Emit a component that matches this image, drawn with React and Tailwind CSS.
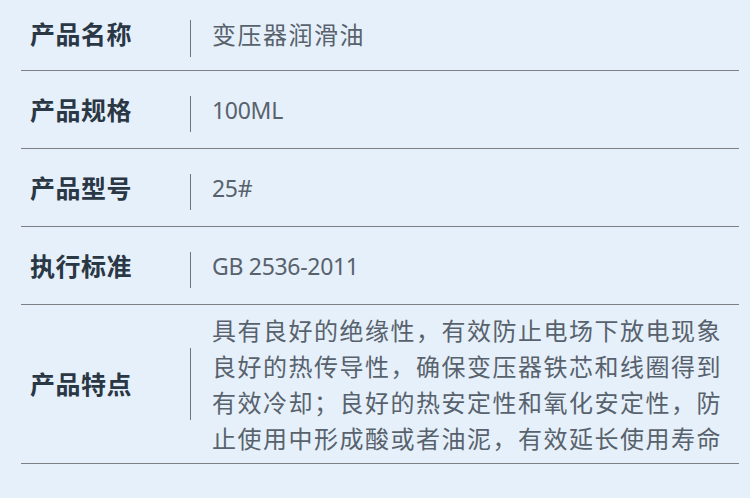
const font = { fontFamily: '"Noto Sans CJK SC", "Noto Sans", sans-serif' };

const rows = [
  { label: "产品名称", value: ["变压器润滑油"], first: true },
  { label: "产品规格", value: ["100ML"], latin: true },
  { label: "产品型号", value: ["25#"], latin: true },
  { label: "执行标准", value: ["GB 2536-2011"], latin: true },
  {
    label: "产品特点",
    value: [
      "具有良好的绝缘性，有效防止电场下放电现象",
      "良好的热传导性，确保变压器铁芯和线圈得到",
      "有效冷却；良好的热安定性和氧化安定性，防",
      "止使用中形成酸或者油泥，有效延长使用寿命",
    ],
    tall: true,
  },
];

function Row({ label, value, first, tall, latin }) {
  return (
    <div
      className={
        "flex items-center border-b border-[#7e8086] " +
        (tall ? "h-[159px]" : first ? "h-[71px] pb-[3px]" : "h-[78px] pt-[1px]")
      }
    >
      <div className="w-[169px] shrink-0 pl-[9px] text-[25px] font-bold tracking-[0.5px] text-[#2a3744]">
        {label}
      </div>
      <div
        className={
          "w-px shrink-0 bg-[#6f737a] " +
          (tall ? "h-[72px]" : first ? "h-[37px] mt-[9px]" : "h-[36px] mt-[8px]")
        }
      />
      <div
        className={
          "pl-[21px] leading-[36px] text-[#58626d] " +
          (latin ? "text-[23px] tracking-[-0.3px]" : "text-[24px] tracking-[1.5px]")
        }
        style={latin ? { fontFamily: '"Noto Sans", sans-serif' } : undefined}
      >
        {value.map((line, i) => (
          <div key={i} className="whitespace-nowrap">{line}</div>
        ))}
      </div>
    </div>
  );
}

export default function App() {
  return (
    <div className="w-[750px] h-[498px] bg-[#e6f0fa] overflow-hidden" style={font}>
      <div className="mx-[21px] w-[718px]">
        {rows.map((r) => (
          <Row key={r.label} {...r} />
        ))}
      </div>
    </div>
  );
}
